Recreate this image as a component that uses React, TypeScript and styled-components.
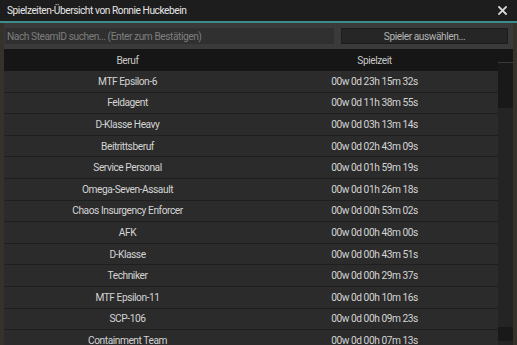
import React from 'react';
import styled, { createGlobalStyle } from 'styled-components';

type Entry = { job: string; time: string };

const entries: Entry[] = [
  { job: 'MTF Epsilon-6', time: '00w 0d 23h 15m 32s' },
  { job: 'Feldagent', time: '00w 0d 11h 38m 55s' },
  { job: 'D-Klasse Heavy', time: '00w 0d 03h 13m 14s' },
  { job: 'Beitrittsberuf', time: '00w 0d 02h 43m 09s' },
  { job: 'Service Personal', time: '00w 0d 01h 59m 19s' },
  { job: 'Omega-Seven-Assault', time: '00w 0d 01h 26m 18s' },
  { job: 'Chaos Insurgency Enforcer', time: '00w 0d 00h 53m 02s' },
  { job: 'AFK', time: '00w 0d 00h 48m 00s' },
  { job: 'D-Klasse', time: '00w 0d 00h 43m 51s' },
  { job: 'Techniker', time: '00w 0d 00h 29m 37s' },
  { job: 'MTF Epsilon-11', time: '00w 0d 00h 10m 16s' },
  { job: 'SCP-106', time: '00w 0d 00h 09m 23s' },
  { job: 'Containment Team', time: '00w 0d 00h 07m 13s' },
];

const GlobalStyle = createGlobalStyle`
  html, body {
    margin: 0;
    padding: 0;
    background: #35322b;
    overflow: hidden;
  }
  body {
    font-family: Roboto, "Liberation Sans", sans-serif;
    font-size: 10.2px;
    letter-spacing: -0.45px;
  }
`;

const Frame = styled.div`
  width: 517px;
  height: 345px;
  display: flex;
  flex-direction: column;
  overflow: hidden;
`;

const TitleBar = styled.div`
  height: 21px;
  flex: none;
  background: #1d1d1d;
  border-bottom: 2px solid #3e8c8c;
  display: flex;
  align-items: center;
  justify-content: space-between;
  padding: 0 10px 0 7px;
`;

const Title = styled.span`
  color: #e6e6e6;
  font-size: 10.2px;
`;

const CloseIcon = () => (
  <svg width="9" height="9" viewBox="0 0 9 9">
    <path d="M1 1 L8 8 M8 1 L1 8" stroke="#d8d8d8" strokeWidth="1.8" strokeLinecap="square" />
  </svg>
);

const Body = styled.div`
  flex: 1;
  min-height: 0;
  margin: 0 4px;
  background: #3a3a3a;
  display: flex;
  flex-direction: column;
  padding-top: 5px;
  gap: 4px;
`;

const Toolbar = styled.div`
  display: flex;
  gap: 7px;
  height: 16px;
  flex: none;
  padding-left: 1px;
`;

const Search = styled.div`
  flex: none;
  width: 329px;
  background: #303030;
  color: #7e7e7e;
  display: flex;
  align-items: center;
  padding-left: 2px;
  box-sizing: border-box;
`;

const PickButton = styled.div`
  flex: 1;
  margin-right: 5px;
  background: #262626;
  border: 1px solid #1c1c1c;
  box-sizing: border-box;
  color: #b4b4b4;
  display: flex;
  align-items: center;
  justify-content: center;
`;

const Table = styled.div`
  flex: 1;
  min-height: 0;
  margin-top: 1px;
  display: grid;
  grid-template-columns: 1fr 15px;
  grid-template-rows: 13px 1fr;
  background: #161616;
`;

const Header = styled.div`
  grid-column: 1 / 2;
  grid-row: 1 / 2;
  position: relative;
  z-index: 1;
  display: grid;
  grid-template-columns: 1fr 1fr;
  height: 22px;
  align-items: center;
  background: #161616;
  color: #c8c8c8;
  text-align: center;
`;

const RowList = styled.div`
  grid-column: 1 / 2;
  grid-row: 1 / 3;
  padding-top: 22px;
  display: flex;
  flex-direction: column;
  gap: 1px;
  background: #1f1f1f;
  overflow: hidden;
`;

const Row = styled.div`
  flex: none;
  height: 20.6px;
  display: grid;
  grid-template-columns: 1fr 1fr;
  align-items: center;
  background: #2b2b2b;
  color: #d4d4d4;
  text-align: center;
`;

const Scrollbar = styled.div`
  grid-column: 2 / 3;
  grid-row: 2 / 3;
  display: flex;
  flex-direction: column;
  background: #242424;
  border-top: 1px solid #3a3a3a;
`;

const Grip = styled.div<{ $h: number; $push?: boolean }>`
  height: ${(p) => p.$h}px;
  flex: none;
  background: #191919;
  margin-top: ${(p) => (p.$push ? 'auto' : '0')};
  margin-bottom: ${(p) => (p.$push ? '4px' : '0')};
`;

export default function App() {
  return (
    <>
      <GlobalStyle />
      <Frame>
        <TitleBar>
          <Title>Spielzeiten-Übersicht von Ronnie Huckebein</Title>
          <CloseIcon />
        </TitleBar>
        <Body>
          <Toolbar>
            <Search>Nach SteamID suchen... (Enter zum Bestätigen)</Search>
            <PickButton>Spieler auswählen...</PickButton>
          </Toolbar>
          <Table>
            <Header>
              <span>Beruf</span>
              <span>Spielzeit</span>
            </Header>
            <RowList>
              {entries.map((e) => (
                <Row key={e.job}>
                  <span>{e.job}</span>
                  <span>{e.time}</span>
                </Row>
              ))}
            </RowList>
            <Scrollbar>
              <Grip $h={45} />
              <Grip $h={14} $push />
            </Scrollbar>
          </Table>
        </Body>
      </Frame>
    </>
  );
}
